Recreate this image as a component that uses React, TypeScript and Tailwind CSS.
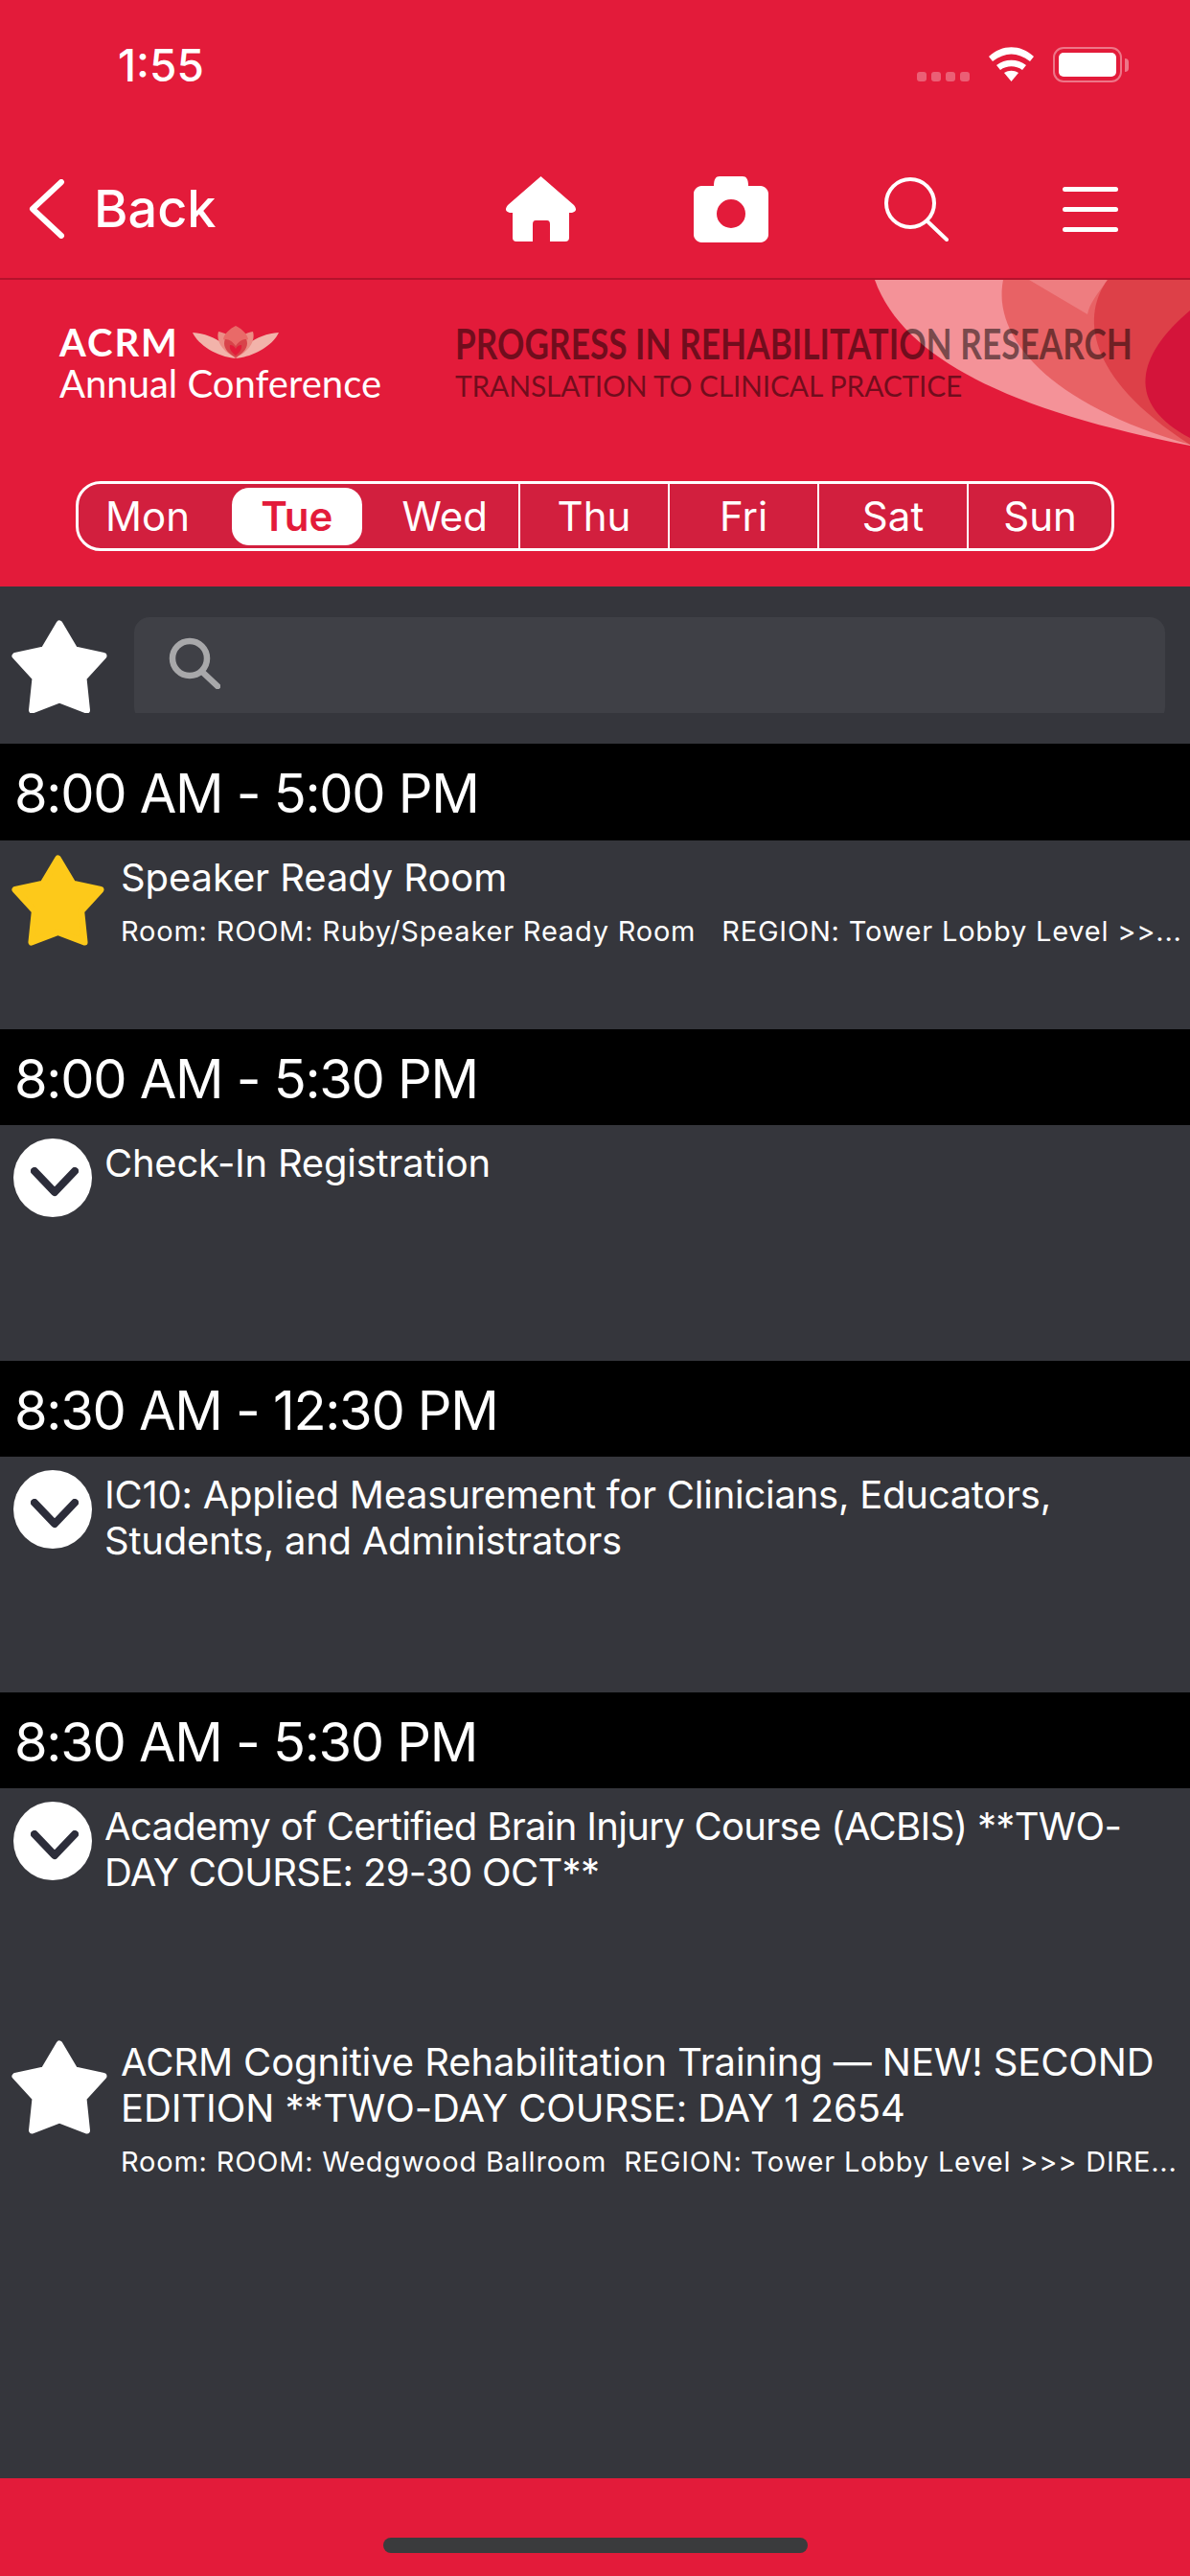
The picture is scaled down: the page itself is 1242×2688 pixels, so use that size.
const days = ["Mon", "Tue", "Wed", "Thu", "Fri", "Sat", "Sun"];

function Star({ color = "#ffffff", size = 100 }: { color?: string; size?: number }) {
  return (
    <svg width={size} height={size} viewBox="0 0 100 100" className="shrink-0">
      <path
        fill={color}
        stroke={color}
        strokeWidth="7"
        strokeLinejoin="round"
        d="M50 4L66 31l30 6.500-21 23 3.500 33.500L50 83 21.500 94 25 60.500 4 37.500 34 31z"
      />
    </svg>
  );
}

function Chevron() {
  return (
    <div className="flex h-[82px] w-[82px] shrink-0 items-center justify-center rounded-full bg-white pt-[8px] pl-[3px]">
      <svg width="50" height="31" viewBox="0 0 50 31" fill="none">
        <path d="M4 4l21 22L46 4" stroke="#2c2d3a" strokeWidth="8" strokeLinecap="round" strokeLinejoin="round" />
      </svg>
    </div>
  );
}

function TimeHeader({ label, height = "h-[100px]" }: { label: string; height?: string }) {
  return (
    <div className={`flex ${height} items-center bg-black pl-[15px] pt-[3px] text-[56px] leading-none tracking-[-1.3px] text-white`}>
      {label}
    </div>
  );
}

function FavRow({
  star,
  starSize,
  starTop,
  title,
  sub,
  height,
}: {
  star: string;
  starSize: number;
  starTop: string;
  title: React.ReactNode;
  sub: string;
  height: string;
}) {
  return (
    <div className={`flex ${height} pl-[12px]`}>
      <div className={`${starTop} w-[100px] shrink-0`}>
        <Star color={star} size={starSize} />
      </div>
      <div className="ml-[14px] min-w-0 flex-1 pt-[15px]">
        <div className="text-[40px] leading-[48px] tracking-[-0.1px] text-white">{title}</div>
        <div className="mt-[14px] text-[29px] leading-[36px] tracking-[0.8px] whitespace-pre text-white">{sub}</div>
      </div>
    </div>
  );
}

function ExpandRow({ title, height }: { title: React.ReactNode; height: string }) {
  return (
    <div className={`flex ${height} pl-[14px] pt-[14px]`}>
      <Chevron />
      <div className="ml-[13px] pt-[2px] text-[40px] leading-[48px] tracking-[-0.25px] text-white">{title}</div>
    </div>
  );
}

export default function App() {
  return (
    <div className="flex h-[2688px] w-[1242px] flex-col overflow-hidden bg-[#35363c] font-['Inter',sans-serif]">
      <div className="bg-[#e31b3a]">
        {/* status bar */}
        <div className="flex h-[136px] items-start justify-between pl-[123px] pr-[64px] pt-[44px]">
          <span className="text-[46px] leading-[48px] font-medium text-white">1:55</span>
          <div className="flex items-start pt-[5px]">
            <div className="mt-[26px] mr-[20px] flex gap-[5px]">
              <span className="h-[10px] w-[10px] rounded-[3px] bg-white/30" />
              <span className="h-[10px] w-[10px] rounded-[3px] bg-white/30" />
              <span className="h-[10px] w-[10px] rounded-[3px] bg-white/30" />
              <span className="h-[10px] w-[10px] rounded-[3px] bg-white/30" />
            </div>
            <svg width="47" height="36" viewBox="0 0 47 36" className="mr-[20px]">
              <path d="M0 10C14-3 33-3 47 10l-4 5C30 5 17 5 4 15z" fill="#fff" />
              <path d="M8 19c9-7 22-7 31 0l-4 5c-7-5-16-5-23 0z" fill="#fff" />
              <path d="M16 27c5-3 10-3 15 0l-7.500 9z" fill="#fff" />
            </svg>
            <div className="flex items-center">
              <div className="flex h-[37px] w-[72px] items-center justify-center rounded-[11px] border-2 border-white/40">
                <div className="h-[25px] w-[60px] rounded-[5px] bg-white" />
              </div>
              <div className="ml-[3px] h-[14px] w-[4px] rounded-r-full bg-white/40" />
            </div>
          </div>
        </div>
        {/* nav bar */}
        <div className="flex h-[156px] items-center border-b-2 border-[#b5122c] pt-[10px]">
          <div className="flex w-[527px] items-center pl-[30px]">
            <svg width="38" height="62" viewBox="0 0 38 62" fill="none">
              <path d="M34 3L4 31l30 28" stroke="#fff" strokeWidth="6" strokeLinecap="round" strokeLinejoin="round" />
            </svg>
            <span className="ml-[30px] text-[54px] leading-none font-medium text-white">Back</span>
          </div>
          <svg width="75" height="68" viewBox="0 0 75 68">
            <path
              d="M37.500 0L72 30Q77 36 70 38H67V64Q67 68 63 68H47V50Q47 46 44 46H32Q29 46 29 50V68H12Q8 68 8 64V38H5Q-2 36 3 30Z"
              fill="#fff"
            />
          </svg>
          <svg width="78" height="69" viewBox="0 0 78 69" className="ml-[122px]">
            <path
              fillRule="evenodd"
              d="M27 0h24c4 0 6 3 6 10h13c4 0 8 4 8 8v43c0 4-4 8-8 8H8c-4 0-8-4-8-8V18c0-4 4-8 8-8h13c0-7 2-10 6-10zM39 24a15 15 0 100 30 15 15 0 000-30z"
              fill="#fff"
            />
          </svg>
          <svg width="67" height="67" viewBox="0 0 67 67" fill="none" stroke="#fff" strokeWidth="4" className="ml-[121px]">
            <circle cx="27" cy="27" r="25" />
            <path d="M45 46l20 19" strokeLinecap="round" />
          </svg>
          <div className="ml-[119px] flex w-[58px] flex-col gap-[16px]">
            <span className="h-[5px] rounded-full bg-white" />
            <span className="h-[5px] rounded-full bg-white" />
            <span className="h-[5px] rounded-full bg-white" />
          </div>
        </div>
        {/* banner */}
        <div className="relative h-[210px] overflow-hidden">
          <svg className="absolute top-0 left-[905px]" width="337" height="174" viewBox="0 0 337 174">
            <path d="M8 0C40 90 170 140 337 173V0z" fill="#f49298" />
            <path d="M142 0C130 60 190 130 337 172V0z" fill="#e86265" />
            <path d="M169 0h82c-11 15-19 25-21 36z" fill="#ee7d80" />
            <path d="M251 0C225 35 225 100 337 172V0z" fill="#dd4048" />
            <path d="M337 32C280 80 270 130 337 165z" fill="#d4143a" />
          </svg>
          <div className="relative flex items-start pl-[62px] pt-[48px] font-['Lato',sans-serif]">
            <div className="w-[413px] shrink-0 text-white">
              <div className="flex h-[34px] items-center">
                <span className="text-[40px] leading-none font-bold tracking-[2px]">ACRM</span>
                <svg width="90" height="34" viewBox="0 0 90 34" className="ml-[14px]">
                  <path d="M45 34C25 32 6 20 0 7c12 1 24 5 30 11zM45 34c20-2 39-14 45-27-12 1-24 5-30 11z" fill="#f2b3aa" />
                  <path d="M45 33C32 28 24 16 27 6c6 1 12 4 18 10zM45 33c13-5 21-17 18-27-6 1-12 4-18 10z" fill="#eb8d85" />
                  <path d="M45 0c-6 3-12 8-13 14 5 2 10 5 13 9 3-4 8-7 13-9-1-6-7-11-13-14z" fill="#e96a68" />
                  <path d="M45 33C35 28 31 20 34 14c5 0 8 3 11 7 3-4 6-7 11-7 3 6-1 14-11 19z" fill="#d8434a" />
                  <path d="M45 31c-4-3-7-7-6-11 3 0 5 2 6 4 1-2 3-4 6-4 1 4-2 8-6 11z" fill="#e31b3a" />
                </svg>
              </div>
              <div className="mt-[4px] text-[40px] leading-[44px] whitespace-nowrap">Annual Conference</div>
            </div>
            <div className="text-black/50">
              <div className="h-[36px] origin-left scale-x-[0.8] text-[44px] leading-[36px] font-bold whitespace-nowrap">
                PROGRESS IN REHABILITATION RESEARCH
              </div>
              <div className="mt-[11px] text-[30px] leading-[30px] tracking-[-0.2px] whitespace-nowrap">
                TRANSLATION TO CLINICAL PRACTICE
              </div>
            </div>
          </div>
        </div>
        {/* days */}
        <div className="flex h-[110px] justify-center">
          <div className="flex h-[73px] w-[1084px] rounded-[26px] border-[3px] border-white bg-[#d21f3e]">
            {days.map((day, i) => (
              <div
                key={day}
                className={`flex items-center justify-center text-[42px] leading-none text-white ${
                  i === 0 ? "w-[150px] pr-[6px]" : i === 6 ? "flex-1" : i < 3 ? "w-[155.500px]" : "w-[156px]"
                } ${i > 1 && i < 6 ? "border-r-2 border-white" : ""}`}
              >
                {day === "Tue" ? (
                  <span className="flex h-[60px] w-[136px] items-center justify-center rounded-[18px] bg-white font-semibold text-[#e31b3a]">
                    {day}
                  </span>
                ) : (
                  day
                )}
              </div>
            ))}
          </div>
        </div>
      </div>

      {/* search row, its bottom edge is clipped in the app */}
      <div className="h-[164px] px-[12px] pt-[32px]">
        <div className="flex h-[100px] overflow-hidden">
          <div className="w-[100px] shrink-0 pt-[3px]">
            <Star size={100} />
          </div>
          <div className="ml-[28px] flex h-[110px] w-[1076px] rounded-[16px] bg-[#3f4046] pl-[36px] pt-[21px]">
            <svg width="54" height="54" viewBox="0 0 54 54" fill="none" stroke="#a8a8aa" strokeWidth="6.500">
              <circle cx="22" cy="22" r="18" />
              <path d="M35 36l16 15" strokeLinecap="round" />
            </svg>
          </div>
        </div>
      </div>

      <TimeHeader label="8:00 AM - 5:00 PM" height="h-[101px]" />
      <FavRow
        star="#fdc91a"
        starSize={97}
        starTop="mt-[15px]"
        title="Speaker Ready Room"
        sub="Room: ROOM: Ruby/Speaker Ready Room   REGION: Tower Lobby Level >>..."
        height="h-[197px]"
      />
      <TimeHeader label="8:00 AM - 5:30 PM" />
      <ExpandRow title="Check-In Registration" height="h-[246px]" />
      <TimeHeader label="8:30 AM - 12:30 PM" />
      <ExpandRow
        title={
          <>
            IC10: Applied Measurement for Clinicians, Educators,
            <br />
            Students, and Administrators
          </>
        }
        height="h-[246px]"
      />
      <TimeHeader label="8:30 AM - 5:30 PM" />
      <ExpandRow
        title={
          <span className="tracking-[-0.7px]">
            Academy of Certified Brain Injury Course (ACBIS) **TWO-
            <br />
            DAY COURSE: 29-30 OCT**
          </span>
        }
        height="h-[247px]"
      />
      <FavRow
        star="#ffffff"
        starSize={100}
        starTop="mt-[16px]"
        title={
          <>
            ACRM Cognitive Rehabilitation Training — NEW! SECOND
            <br />
            EDITION **TWO-DAY COURSE: DAY 1 2654
          </>
        }
        sub="Room: ROOM: Wedgwood Ballroom  REGION: Tower Lobby Level >>> DIRE..."
        height="h-[473px]"
      />

      {/* bottom bar */}
      <div className="flex flex-1 items-end justify-center bg-[#e31b3a] pb-[24px]">
        <div className="h-[16px] w-[443px] rounded-full bg-[#3a3b3d]" />
      </div>
    </div>
  );
}
